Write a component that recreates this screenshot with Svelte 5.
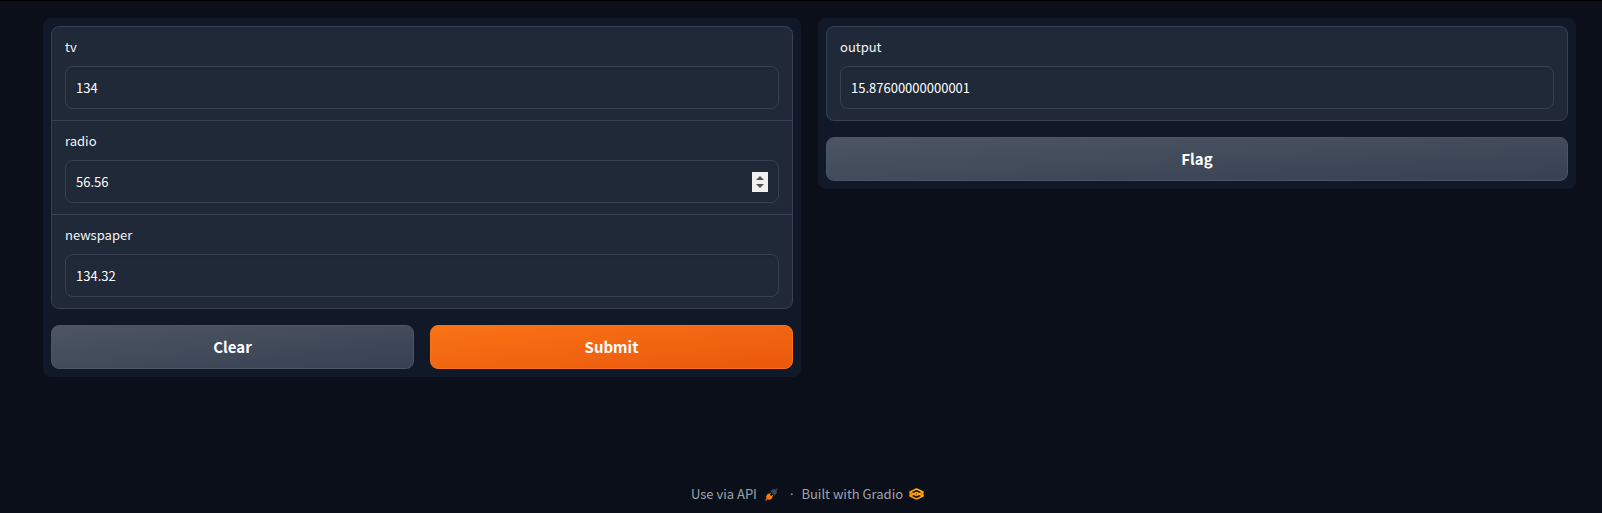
<script>
  let tv = $state(134);
  let radio = $state(56.56);
  let newspaper = $state(134.32);
  let output = $state('15.87600000000001');

  function clear() {
    tv = null;
    radio = null;
    newspaper = null;
    output = '';
  }
</script>

<div class="page">
  <main>
    <form class="column" onsubmit={(e) => e.preventDefault()}>
      <div class="group">
        <div class="field">
          <label for="tv">tv</label>
          <input id="tv" type="number" step="any" bind:value={tv} />
        </div>
        <div class="field">
          <label for="radio">radio</label>
          <input id="radio" class="stepping" type="number" step="any" bind:value={radio} />
        </div>
        <div class="field">
          <label for="newspaper">newspaper</label>
          <input id="newspaper" type="number" step="any" bind:value={newspaper} />
        </div>
      </div>
      <div class="actions">
        <button type="button" onclick={clear}>Clear</button>
        <button type="submit" class="primary">Submit</button>
      </div>
    </form>

    <section class="column">
      <div class="group">
        <div class="field">
          <label for="output">output</label>
          <input id="output" type="text" readonly value={output} />
        </div>
      </div>
      <div class="actions">
        <button type="button">Flag</button>
      </div>
    </section>
  </main>

  <footer>
    <a href="#api">
      Use via API
      <svg class="plug" viewBox="0 0 28 28" aria-hidden="true">
        <path
          fill="#3c4555"
          d="M26.94 2.94a1.33 1.33 0 0 0-1.88-1.88l-2.49 2.48c-1.45-.95-3.03-1.11-4.4-.9-1.62.25-3.06 1.03-3.78 1.75l-2 2a1.33 1.33 0 0 0 0 1.89l7.33 7.33c.52.52 1.37.52 1.89 0l2-2c.72-.72 1.5-2.16 1.75-3.79.2-1.36.05-2.94-.9-4.39z"
        />
        <path
          fill="#ff7c00"
          d="M12.28 12.94a1.33 1.33 0 0 0-1.89-1.88l-1.72 1.72-.39-.39a1.33 1.33 0 0 0-1.89 0l-2 2c-.72.72-1.5 2.16-1.75 3.79-.2 1.36-.05 2.94.9 4.39l-2.48 2.49a1.33 1.33 0 0 0 1.88 1.88l2.49-2.48c1.45.95 3.03 1.11 4.4.9 1.62-.25 3.06-1.03 3.78-1.75l2-2a1.33 1.33 0 0 0 0-1.89l-.39-.39 1.72-1.72a1.33 1.33 0 0 0-1.88-1.89l-1.73 1.73-2.78-2.78z"
        />
      </svg>
    </a>
    <span class="dot">·</span>
    <a href="#gradio">
      Built with Gradio
      <svg class="logo" viewBox="0 0 30 24" aria-hidden="true">
        <defs>
          <linearGradient id="amber" x1="0" y1="1" x2="1" y2="0">
            <stop offset="0" stop-color="#ff8a00" />
            <stop offset="1" stop-color="#ffbf0d" />
          </linearGradient>
        </defs>
        <g fill="none" stroke="url(#amber)" stroke-width="3" stroke-linejoin="round">
          <path d="M15 2 28 8 15 15 2 8Z" />
          <path d="M15 9 28 16 15 22 2 16Z" />
        </g>
        <path fill="#ff9d00" d="M1 8h3v8H1zM26 8h3v8h-3z" />
      </svg>
    </a>
  </footer>
</div>

<style>
  :global(body) {
    margin: 0;
    background: #0b0f19;
  }

  .page {
    box-sizing: border-box;
    display: flex;
    flex-direction: column;
    min-height: 100vh;
    padding: 17px 26px 9px 43px;
    border-top: 1px solid #000;
    color: #f3f4f6;
    font-family: "Noto Sans CJK SC", "Noto Sans", sans-serif;
    font-size: 13px;
    line-height: 20px;
  }

  main {
    display: flex;
    flex: 1;
    align-items: flex-start;
    gap: 17px;
  }

  .column {
    box-sizing: border-box;
    display: flex;
    flex: 1;
    flex-direction: column;
    gap: 16px;
    min-width: 0;
    padding: 8px;
    border-radius: 8px;
    background: #111827;
  }

  .group {
    overflow: hidden;
    border: 1px solid #374151;
    border-radius: 8px;
    background: #1f2937;
  }

  .field {
    display: flex;
    flex-direction: column;
    gap: 9px;
    padding: 10px 13px 11px;
  }

  .field + .field {
    border-top: 1px solid #374151;
  }

  input {
    box-sizing: border-box;
    width: 100%;
    height: 43px;
    margin: 0;
    padding: 10px;
    border: 1px solid #374151;
    border-radius: 8px;
    outline: none;
    background: #1f2937;
    box-shadow: inset 0 2px 4px rgb(0 0 0 / 0.05);
    color: #fff;
    font: inherit;
  }

  .stepping::-webkit-inner-spin-button {
    appearance: none;
    width: 16px;
    height: 20px;
    background: #f0f0f0
      url("data:image/svg+xml,%3Csvg xmlns='http://www.w3.org/2000/svg' viewBox='0 0 16 20'%3E%3Cpath fill='%23505050' d='M4 8 8 4l4 4zM4 12l4 4 4-4z'/%3E%3C/svg%3E")
      center / 16px 20px no-repeat;
    opacity: 1;
  }

  .actions {
    display: flex;
    gap: 16px;
  }

  button {
    flex: 1;
    height: 44px;
    padding: 0 16px;
    border: 1px solid #4b5563;
    border-radius: 8px;
    background: linear-gradient(to bottom right, #4b5563, #374151);
    color: #fff;
    font: inherit;
    font-size: 15px;
    font-weight: 700;
    cursor: pointer;
  }

  .primary {
    border-color: #f97316;
    background: linear-gradient(to bottom right, #f97316, #ea580c);
  }

  footer {
    display: flex;
    justify-content: center;
    gap: 8px;
    color: #9ca3af;
  }

  a {
    display: flex;
    align-items: center;
    color: inherit;
    text-decoration: none;
  }

  .dot {
    font-family: "Noto Sans", sans-serif;
  }

  .plug {
    width: 13px;
    height: 13px;
    margin: 0 4px 0 8px;
  }

  .logo {
    width: 15px;
    height: 12px;
    margin: 0 4px 0 6px;
  }
</style>
